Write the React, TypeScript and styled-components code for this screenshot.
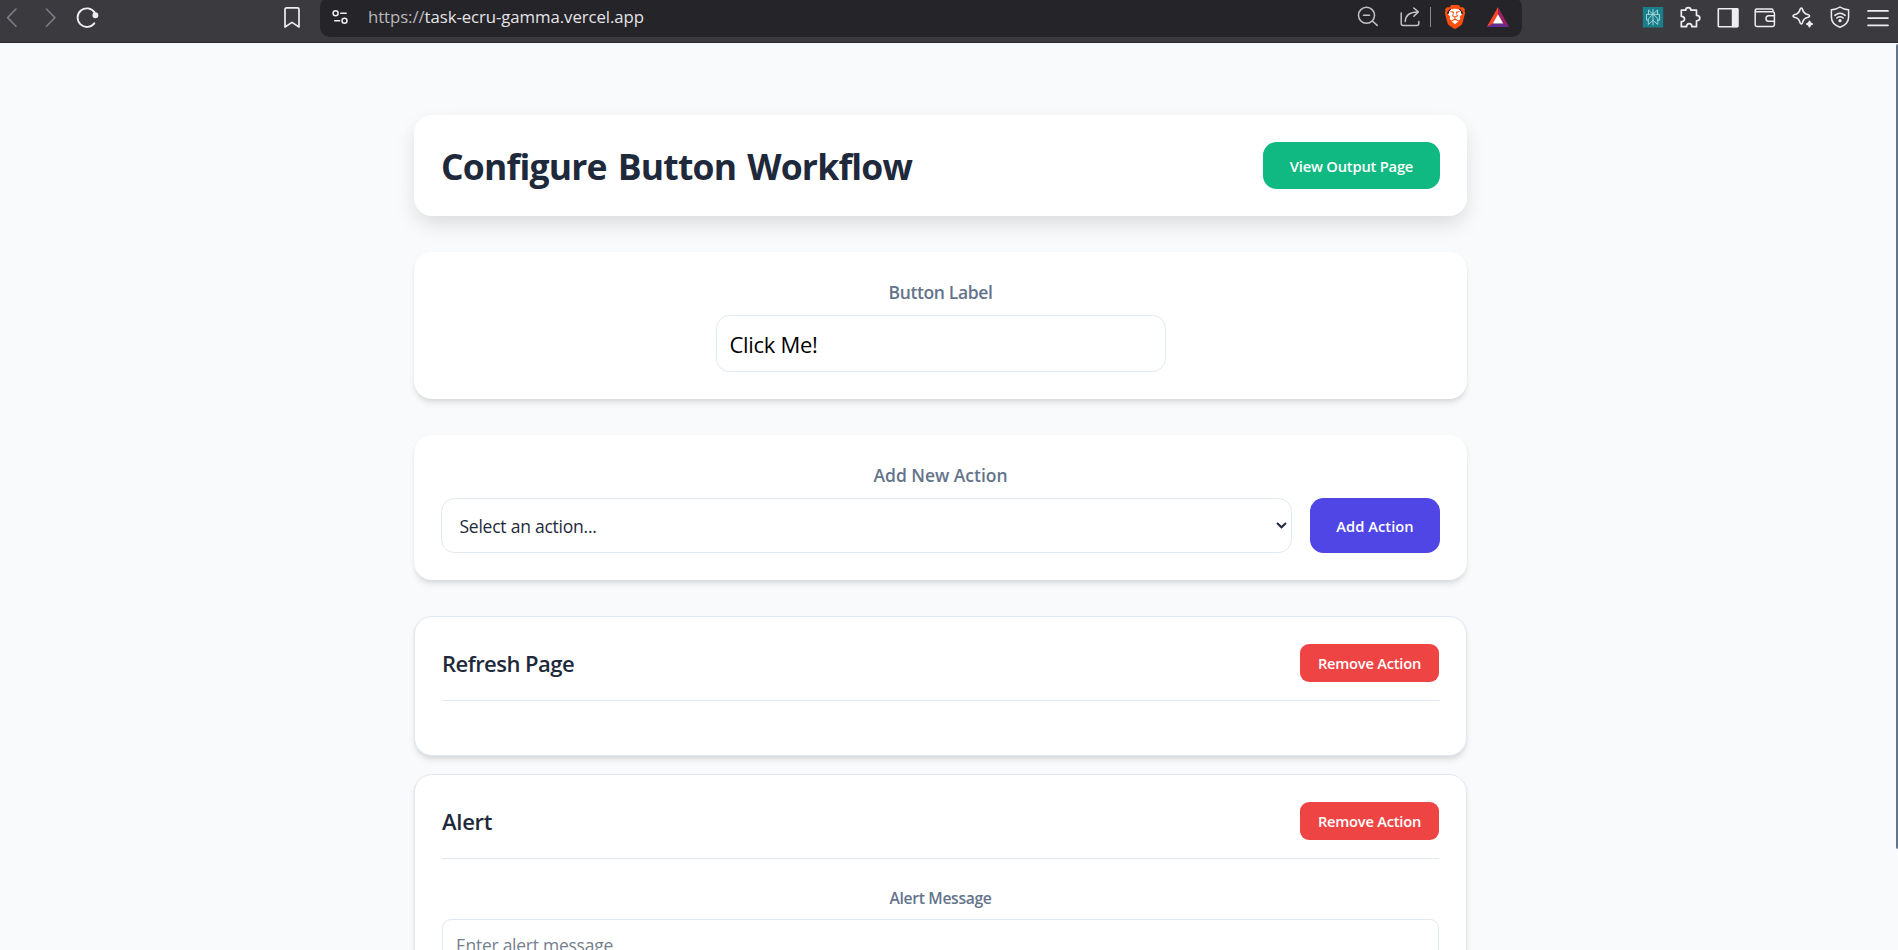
import React from "react";
import styled, { createGlobalStyle, css } from "styled-components";
import { SiBrave } from "react-icons/si";

const GlobalStyle = createGlobalStyle`
  *, *::before, *::after { box-sizing: border-box; }
  html, body { margin: 0; height: 950px; overflow: hidden; background: #f8fafc; }
  body, button, input, select { font-family: "Open Sans", "Noto Sans", sans-serif; }
`;

const Window = styled.div`
  position: relative;
  display: flex;
  flex-direction: column;
  height: 950px;
  overflow: hidden;
  background: #f8fafc;
`;

/* ---------- browser toolbar ---------- */

const Toolbar = styled.header`
  display: flex;
  flex: none;
  align-items: flex-start;
  height: 43px;
  background: #3b3a3f;
  border-bottom: 1px solid #2b292d;
`;

const NavGroup = styled.nav`
  display: flex;
  align-items: center;
  width: 320px;
  height: 34px;
  padding-right: 16.5px;
  gap: 13.5px;
`;

const Spacer = styled.span`
  flex: 1;
`;

const AddressBar = styled.div`
  display: flex;
  align-items: center;
  width: 1202px;
  height: 40px;
  margin-top: -3px;
  padding: 0 12px 0 8px;
  border-radius: 10px;
  background: #252429;
`;

const Address = styled.span`
  flex: 1;
  margin-left: 16px;
  color: #e4e3e8;
  font-size: 16.8px;
  line-height: 24px;
  letter-spacing: -0.08px;
  white-space: nowrap;
`;

const Scheme = styled.span`
  color: #b9b8bd;
`;

const AddressTools = styled.div`
  display: flex;
  align-items: center;
`;

const ToolDivider = styled.span`
  width: 1px;
  height: 20px;
  margin: 0 13px 0 8px;
  background: #8a898e;
`;

const Extensions = styled.div`
  display: flex;
  align-items: center;
  height: 34px;
  margin-left: auto;
  padding-right: 8.5px;
  gap: 13.5px;
`;

const Glyph = styled.svg<{ $color?: string; $weight?: number; $gap?: number }>`
  flex: none;
  width: 24px;
  height: 24px;
  margin-right: ${({ $gap = 0 }) => $gap}px;
  fill: none;
  stroke: ${({ $color = "#eeedf1" }) => $color};
  stroke-width: ${({ $weight = 1.6 }) => $weight};
  stroke-linecap: round;
  stroke-linejoin: round;
  overflow: visible;
`;

const BraveBadge = styled.span`
  display: flex;
  align-items: center;
  justify-content: center;
  width: 22px;
  height: 24px;
  margin-right: 20px;
  color: #fb4f0e;
  background: radial-gradient(ellipse 7px 9px at 50% 48%, #fff 96%, transparent);

  svg { width: 24px; height: 24px; flex: none; }
`;

function BrowserToolbar() {
  return (
    <Toolbar>
      <NavGroup>
        <Glyph viewBox="0 0 24 24" $color="#7d7c82"><path d="M16 4 7.6 12.6 16 21.2" /></Glyph>
        <Glyph viewBox="0 0 24 24" $color="#7d7c82"><path d="M8.5 4l8.4 8.6-8.4 8.6" /></Glyph>
        <Glyph viewBox="0 0 24 24" $weight={1.9}>
          <path d="M19.6 7.4A9.3 9.3 0 1 0 19.3 18.3" />
          <circle cx="20.4" cy="10.2" r="2" fill="#eeedf1" />
        </Glyph>
        <Spacer />
        <Glyph viewBox="0 0 24 24" $weight={1.7}><path d="M5 4.3A1.5 1.5 0 0 1 6.5 2.8h11A1.5 1.5 0 0 1 19 4.3V22l-7-4.6L5 22Z" /></Glyph>
      </NavGroup>

      <AddressBar>
        <Glyph viewBox="0 0 24 24" $weight={1.5}>
          <circle cx="7.6" cy="8.2" r="2.5" /><path d="M12.7 8.2h5.5M6.7 15.8h5" /><circle cx="16.5" cy="15.8" r="2.5" />
        </Glyph>
        <Address><Scheme>https://</Scheme>task-ecru-gamma.vercel.app</Address>
        <AddressTools>
          <Glyph viewBox="0 0 24 24" $color="#c3c2c7" $weight={1.5} $gap={18}>
            <circle cx="10.5" cy="10.3" r="8" /><path d="m16.4 16 4.8 4.4M7.5 10.3h6" />
          </Glyph>
          <Glyph viewBox="0 0 24 24" $color="#c3c2c7" $weight={1.5}>
            <path d="M3.2 8v10.500c0 1.2.8 2 2 2h13.600c1.2 0 2-.8 2-2v-2M7.2 16.5c.3-6 4-9.6 12.500-9.6M15.8 3l4.5 3.9-4.5 4.3" />
          </Glyph>
          <ToolDivider />
          <BraveBadge><SiBrave /></BraveBadge>
          <Glyph viewBox="0 0 24 24" $color="none">
            <path d="M12 2v7.5L6.5 19.3.8 22Z" fill="#ff4724" />
            <path d="M12 2v7.5l5.5 9.8L23.2 22Z" fill="#9e1f63" />
            <path d="M.8 22 6.5 18.5h11L23.2 22Z" fill="#662d91" />
            <path d="M12 9.2 6.8 18.5h10.400Z" fill="#fff" />
          </Glyph>
        </AddressTools>
      </AddressBar>

      <Extensions>
        <Glyph viewBox="0 0 24 24" $color="#a9dde0" $weight={0.9}>
          <rect x="1.8" y="2" width="20.4" height="20.5" fill="#1a7f8b" stroke="none" />
          <path d="M12 4.5v15.500M12 9.3 7.5 5v4.3M12 9.3 16.5 5v4.3M7.2 15.2H5.5V9.3h13v5.900h-1.700M12 9.3l-4.7 4.6v5.600l4.7-4.2 4.7 4.2v-5.600Z" />
        </Glyph>
        <Glyph viewBox="0 0 24 24" $weight={1.7}>
          <path d="M3.3 5.2H7.7C7.7 3.5 8.900 2.7 10.3 2.7s2.6.8 2.6 2.5H18.500v5.200c1.900 0 3.3 1 3.3 2.7s-1.400 2.7-3.3 2.7v5.900h-4.600c0-2-1.100-3-2.700-3s-2.700 1-2.700 3H3.3v-5c2.100 0 3.2-1.100 3.2-2.7s-1.100-2.7-3.2-2.7Z" />
        </Glyph>
        <Glyph viewBox="0 0 24 24" $weight={1.6}>
          <rect x="2.3" y="3.7" width="19.500" height="18" rx=".6" /><path d="M16.6 4v17.500h5V4Z" fill="#eeedf1" />
        </Glyph>
        <Glyph viewBox="0 0 24 24" $weight={1.5}>
          <path d="M20 6.8V5.400c0-.8-.6-1.400-1.400-1.400H3.800c-1 0-1.600.6-1.600 1.400v14.400c0 .9.7 1.600 1.600 1.600h16c.9 0 1.600-.7 1.600-1.600V8.400c0-.9-.7-1.600-1.600-1.600H3.800c-.9 0-1.600-.5-1.600-1.400M21.600 10.700h-6c-1.600 0-2.600 1.100-2.600 2.800s1 2.800 2.600 2.800h6" />
        </Glyph>
        <Glyph viewBox="0 0 24 24" $weight={1.6}>
          <path d="M10.300 3c.9 0 1.100.8 1.300 1.500.7 3 1.500 4 4.700 4.900.9.300 2.300.5 2.300 1.600s-1.400 1.300-2.300 1.600c-3.200.9-4 1.900-4.700 4.900-.2.700-.4 1.500-1.300 1.500S9.200 18.200 9 17.500c-.7-3-1.500-4-4.700-4.900C3.400 12.300 2 12.100 2 11s1.400-1.300 2.300-1.600C7.500 8.500 8.300 7.500 9 4.500 9.200 3.800 9.400 3 10.300 3Z" />
          <path d="M18.500 16.200c.4 1.900.9 2.400 2.800 2.800-1.900.4-2.400.9-2.800 2.800-.4-1.900-.9-2.400-2.800-2.800 1.900-.4 2.400-.9 2.800-2.800Z" fill="#eeedf1" />
        </Glyph>
        <Glyph viewBox="0 0 24 24" $weight={1.5}>
          <path d="M12 2C9.500 3.800 6.500 4.600 3.400 4.800V12c0 5.200 3.800 8.500 8.600 10.200 4.800-1.700 8.600-5 8.600-10.200V4.800C17.500 4.600 14.500 3.800 12 2Z" />
          <path d="M6.900 10.400c3.100-2.600 7.100-2.600 10.200 0M8.800 13c2-1.600 4.400-1.600 6.400 0" />
          <circle cx="12" cy="15.700" r=".9" fill="#eeedf1" />
        </Glyph>
        <Glyph viewBox="0 0 24 24" $weight={1.7}><path d="M2 5.900h20M2 13.100h20M2 20.300h20" /></Glyph>
      </Extensions>
    </Toolbar>
  );
}

/* ---------- workflow page ---------- */

const Main = styled.main`
  flex: 1;
  min-height: 0;
  padding: 72px 17px 0 0;
  overflow: hidden;
`;

const Column = styled.div`
  display: flex;
  flex-direction: column;
  gap: 36px;
  width: 1053px;
  margin: 0 auto;
`;

const panel = css`
  padding: 27px;
  border-radius: 18px;
  background: #fff;
`;

const Hero = styled.section`
  ${panel}
  display: flex;
  align-items: center;
  justify-content: space-between;
  box-shadow: 0 9px 27px rgba(0, 0, 0, 0.05), 0 9px 17px -2px rgba(0, 0, 0, 0.08);
`;

const Title = styled.h1`
  margin: 0;
  padding-top: 1px;
  color: #1e293b;
  font-size: 35.5px;
  font-weight: 700;
  line-height: 45px;
  letter-spacing: -0.8px;
  word-spacing: 2.5px;
`;

const Panel = styled.section`
  ${panel}
  display: flex;
  flex-direction: column;
  align-items: center;
  gap: 9px;
  box-shadow: 0 4.5px 6.8px -1px rgba(0, 0, 0, 0.1), 0 2px 4.5px -1px rgba(0, 0, 0, 0.06);
`;

const ActionPanel = styled(Panel)`
  align-items: stretch;
  gap: 0;
  border: 1px solid #e2e8f0;
`;

const ActionList = styled.div`
  display: flex;
  flex-direction: column;
  gap: 18px;
`;

const Label = styled.label<{ $small?: boolean; $tracking: number }>`
  color: #64748b;
  font-size: ${({ $small }) => ($small ? 15.7 : 17.5)}px;
  font-weight: 600;
  line-height: ${({ $small }) => ($small ? 24 : 27)}px;
  letter-spacing: ${({ $tracking }) => $tracking}px;
  text-align: center;
`;

const TextField = styled.input<{ $large?: boolean }>`
  width: ${({ $large }) => ($large ? "450px" : "100%")};
  height: ${({ $large }) => ($large ? 57 : 53)}px;
  padding: ${({ $large }) => ($large ? "0 13px" : "0 13px 1px")};
  border: 1px solid #e2e8f0;
  border-radius: ${({ $large }) => ($large ? 13.5 : 9)}px;
  outline: none;
  background: #fff;
  color: #000;
  font-size: ${({ $large }) => ($large ? 22 : 17.5)}px;
  letter-spacing: ${({ $large }) => ($large ? -0.3 : -0.26)}px;

  &::placeholder { color: #757f8d; opacity: 1; }
`;

const Row = styled.div`
  display: flex;
  align-self: stretch;
  gap: 18px;
`;

const SelectBox = styled.div`
  display: flex;
  flex: 1;
  align-items: center;
  height: 55px;
  padding-right: 4px;
  border: 1px solid #e2e8f0;
  border-radius: 13.5px;
  background: #fff;
`;

const Select = styled.select`
  flex: 1;
  height: 100%;
  padding: 0 0 0 17.5px;
  border: 0;
  outline: none;
  appearance: none;
  background: transparent;
  color: #1e293b;
  font-size: 17.5px;
  letter-spacing: -0.24px;
`;

const Chevron = styled.svg`
  width: 11px;
  height: 7px;
  fill: none;
  stroke: #1e293b;
  stroke-width: 2;
`;

const tones = { green: "#10b981", indigo: "#4f46e5", red: "#ef4444" };

const Button = styled.button<{ $tone: keyof typeof tones; $w: number; $h: number; $tracking: number }>`
  flex: none;
  width: ${({ $w }) => $w}px;
  height: ${({ $h }) => $h}px;
  padding: 0;
  border: 0;
  border-radius: ${({ $tone }) => ($tone === "red" ? 9 : 13.5)}px;
  background: ${({ $tone }) => tones[$tone]};
  color: #fff;
  font-size: 14.7px;
  font-weight: 600;
  letter-spacing: ${({ $tracking }) => $tracking}px;
  white-space: nowrap;
`;

const ActionHead = styled.div`
  display: flex;
  align-items: center;
  justify-content: space-between;
  margin-bottom: 27px;
  padding-bottom: 18px;
  border-bottom: 1px solid #e2e8f0;
`;

const ActionTitle = styled.h2<{ $tracking: number }>`
  margin: 0;
  color: #1e293b;
  font-size: 22px;
  font-weight: 600;
  line-height: 30px;
  letter-spacing: ${({ $tracking }) => $tracking}px;
`;

const Field = styled.div`
  display: flex;
  flex-direction: column;
  gap: 9px;
`;

const ScrollThumb = styled.div`
  position: absolute;
  top: 44px;
  right: 0;
  width: 2px;
  height: 805px;
  border-radius: 2px 0 0 2px;
  background: #64748b;
`;

function ActionCard({ title, tracking, children }: { title: string; tracking: number; children?: React.ReactNode }) {
  return (
    <ActionPanel>
      <ActionHead>
        <ActionTitle $tracking={tracking}>{title}</ActionTitle>
        <Button $tone="red" $w={139} $h={38} $tracking={-0.24}>Remove Action</Button>
      </ActionHead>
      {children}
    </ActionPanel>
  );
}

export default function App() {
  return (
    <Window>
      <GlobalStyle />
      <BrowserToolbar />
      <Main>
        <Column>
          <Hero>
            <Title>Configure Button Workflow</Title>
            <Button $tone="green" $w={177} $h={47} $tracking={-0.2}>View Output Page</Button>
          </Hero>
          <Panel>
            <Label htmlFor="label" $tracking={-0.36}>Button Label</Label>
            <TextField id="label" $large defaultValue="Click Me!" />
          </Panel>
          <Panel>
            <Label htmlFor="action" $tracking={-0.03}>Add New Action</Label>
            <Row>
              <SelectBox>
                <Select id="action" defaultValue="">
                  <option value="">Select an action...</option>
                  <option value="alert">Alert</option>
                  <option value="refresh">Refresh Page</option>
                </Select>
                <Chevron viewBox="0 0 11 7"><path d="m1 1 4.5 4.3L10 1" /></Chevron>
              </SelectBox>
              <Button $tone="indigo" $w={130} $h={55} $tracking={0.03}>Add Action</Button>
            </Row>
          </Panel>
          <ActionList>
            <ActionCard title="Refresh Page" tracking={-0.52} />
            <ActionCard title="Alert" tracking={-0.25}>
              <Field>
                <Label htmlFor="message" $small $tracking={-0.34}>Alert Message</Label>
                <TextField id="message" placeholder="Enter alert message" />
              </Field>
            </ActionCard>
          </ActionList>
        </Column>
      </Main>
      <ScrollThumb />
    </Window>
  );
}
